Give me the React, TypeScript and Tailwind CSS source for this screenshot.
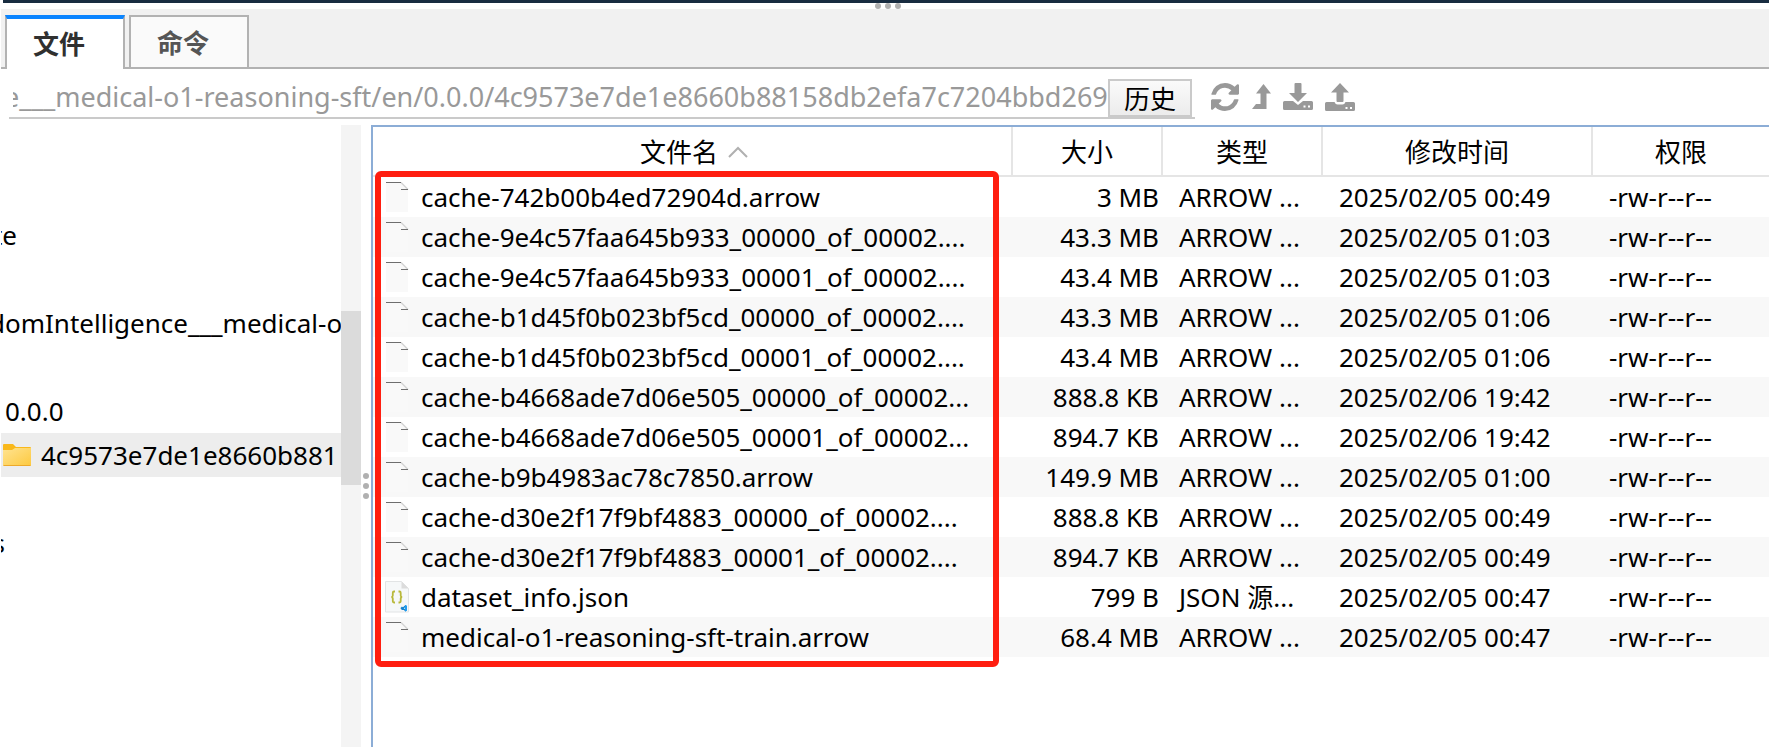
// Path: src/App.tsx
// Description: 远程文件管理面板 - 目录树 + 文件列表

import { useEffect, useRef, useState } from 'react';

type FileItem = {
    name: string;
    size: string;
    type: string;
    time: string;
    mode: string;
};

const MODE = '-rw-r--r--';

const FILES: FileItem[] = [
    { name: 'cache-742b00b4ed72904d.arrow', size: '3 MB', type: 'ARROW ...', time: '2025/02/05 00:49', mode: MODE },
    { name: 'cache-9e4c57faa645b933_00000_of_00002....', size: '43.3 MB', type: 'ARROW ...', time: '2025/02/05 01:03', mode: MODE },
    { name: 'cache-9e4c57faa645b933_00001_of_00002....', size: '43.4 MB', type: 'ARROW ...', time: '2025/02/05 01:03', mode: MODE },
    { name: 'cache-b1d45f0b023bf5cd_00000_of_00002....', size: '43.3 MB', type: 'ARROW ...', time: '2025/02/05 01:06', mode: MODE },
    { name: 'cache-b1d45f0b023bf5cd_00001_of_00002....', size: '43.4 MB', type: 'ARROW ...', time: '2025/02/05 01:06', mode: MODE },
    { name: 'cache-b4668ade7d06e505_00000_of_00002...', size: '888.8 KB', type: 'ARROW ...', time: '2025/02/06 19:42', mode: MODE },
    { name: 'cache-b4668ade7d06e505_00001_of_00002...', size: '894.7 KB', type: 'ARROW ...', time: '2025/02/06 19:42', mode: MODE },
    { name: 'cache-b9b4983ac78c7850.arrow', size: '149.9 MB', type: 'ARROW ...', time: '2025/02/05 01:00', mode: MODE },
    { name: 'cache-d30e2f17f9bf4883_00000_of_00002....', size: '888.8 KB', type: 'ARROW ...', time: '2025/02/05 00:49', mode: MODE },
    { name: 'cache-d30e2f17f9bf4883_00001_of_00002....', size: '894.7 KB', type: 'ARROW ...', time: '2025/02/05 00:49', mode: MODE },
    { name: 'dataset_info.json', size: '799 B', type: 'JSON 源...', time: '2025/02/05 00:47', mode: MODE },
    { name: 'medical-o1-reasoning-sft-train.arrow', size: '68.4 MB', type: 'ARROW ...', time: '2025/02/05 00:47', mode: MODE },
];

function Dots({ vertical = false }: { vertical?: boolean }) {
    return (
        <div className={`flex items-center gap-1 ${vertical ? 'flex-col' : ''}`}>
            <span className="h-1.5 w-1.5 rounded-full bg-[#b0b0b0]" />
            <span className="h-1.5 w-1.5 rounded-full bg-[#b0b0b0]" />
            <span className="h-1.5 w-1.5 rounded-full bg-[#b0b0b0]" />
        </div>
    );
}

function BlankFileIcon() {
    return (
        <svg width="24" height="32" viewBox="0 0 24 32" className="shrink-0">
            <path d="M1 1h15l7 8v22H1z" fill="#f9f9f9" />
            <path d="M16 1.500l7 7" stroke="#d4d4d4" strokeWidth="1.400" fill="none" />
            <path d="M1 1.500h15M16 8.500h7" stroke="#6e6e6e" fill="none" />
        </svg>
    );
}

function JsonFileIcon() {
    return (
        <svg width="24" height="32" viewBox="0 0 24 32" className="shrink-0">
            <path d="M.5.5h16l7 7v23.500H.5z" fill="#f6f8f9" stroke="#e2e4e5" />
            <path d="M16.500 .5v7h7z" fill="#dcdcdc" />
            <path
                d="M10 10.500h-1q-1.200 0-1.200 1.200v2.800q0 1.500-1.500 1.500q1.500 0 1.500 1.500v2.800q0 1.200 1.200 1.200h1M13.500 10.500h1q1.200 0 1.200 1.200v2.800q0 1.500 1.500 1.500q-1.500 0-1.500 1.500v2.800q0 1.200-1.200 1.200h-1"
                fill="none"
                stroke="#b8b83a"
                strokeWidth="1.800"
            />
            <path d="M21 24.500l-4 3.500-1-1M21 30l-4-3.500-1 1" fill="none" stroke="#1583cd" strokeWidth="1.400" />
            <path d="M20 24l2 .8v5l-2 .8z" fill="#1f9cf0" />
        </svg>
    );
}

function FolderIcon() {
    return (
        <svg width="28" height="24" viewBox="0 0 28 24" className="shrink-0">
            <defs>
                <linearGradient id="folder" x1="0" y1="0" x2="1" y2="1">
                    <stop offset="0" stopColor="#ffe391" />
                    <stop offset="1" stopColor="#fdc93f" />
                </linearGradient>
            </defs>
            <path d="M0 2q0-1 1-1h9l3 3h14q1 0 1 1v6H0z" fill="#f9b81b" />
            <path d="M0 7h9l3-2h16v17q0 1-1 1H1q-1 0-1-1z" fill="url(#folder)" />
            <path d="M.5 22.500h27" stroke="#eda92a" />
        </svg>
    );
}

function RefreshIcon() {
    return (
        <svg width="28" height="28" viewBox="0 0 1536 1536" fill="#999">
            <path d="M1511 928q0 5-1 7-64 268-268 434.500T764 1536q-146 0-282.500-55T238 1324l-129 129q-19 19-45 19t-45-19-19-45V960q0-26 19-45t45-19h448q26 0 45 19t19 45-19 45l-137 137q71 66 161 102t187 36q134 0 250-65t186-179q11-17 53-117 8-23 30-23h192q13 0 22.500 9.500t9.500 22.500zm25-800v448q0 26-19 45t-45 19h-448q-26 0-45-19t-19-45 19-45l138-138Q969 256 768 256q-134 0-250 65T332 500q-11 17-53 117-8 23-30 23H50q-13 0-22.500-9.500T18 608v-7q65-268 270-434.500T768 0q146 0 284 55.500T1297 212l130-129q19-19 45-19t45 19 19 45z" />
        </svg>
    );
}

function LevelUpIcon() {
    return (
        <svg width="20" height="28" viewBox="0 0 20 28" fill="#999">
            <path d="M12.500 1L20 10.500h-4.500V26H1l4-5h4.500V10.500H5z" />
        </svg>
    );
}

function DownloadIcon() {
    return (
        <svg width="30" height="28" viewBox="0 0 30 28" fill="#999">
            <path d="M11.500 1q0-1 1-1h5q1 0 1 1v9h5.500L15 19 6 10h5.500z" />
            <path fillRule="evenodd" d="M1.500 18H10l5 4 5-4h8.500q1.500 0 1.500 1.500v6q0 1.500-1.500 1.500h-27Q0 27 0 25.500v-6Q0 18 1.500 18zM20.500 22.500v2h2v-2zM25 22.500v2h2v-2z" />
        </svg>
    );
}

function UploadIcon() {
    return (
        <svg width="30" height="28" viewBox="0 0 30 28" fill="#999">
            <path d="M15 0l9 9.500h-5.500V18q0 1-1 1h-5q-1 0-1-1V9.500H6z" />
            <path fillRule="evenodd" d="M1.500 19H9.500q1 2.500 3 2.500h5q2 0 3-2.500h8q1.500 0 1.500 1.500v6q0 1.500-1.500 1.500h-27Q0 28 0 26.500v-6Q0 19 1.500 19zM20.500 24v2h2v-2zM25 24v2h2v-2z" />
        </svg>
    );
}

export default function App() {
    const [tab, setTab] = useState<'文件' | '命令'>('文件');
    const [path, setPath] = useState('e___medical-o1-reasoning-sft/en/0.0.0/4c9573e7de1e8660b88158db2efa7c7204bbd269');
    const pathRef = useRef<HTMLInputElement>(null);

    // 路径过长时显示末尾
    useEffect(() => {
        if (pathRef.current) pathRef.current.scrollLeft = pathRef.current.scrollWidth;
    }, []);

    return (
        <div className="flex h-screen flex-col overflow-hidden bg-white font-['Noto_Sans','Noto_Sans_CJK_SC',sans-serif] text-[26px] leading-10 text-black">
            {/* 分隔条 */}
            <div className="ml-[3px] h-[3px] shrink-0 bg-[#182c40]" />
            <div className="flex h-1.5 shrink-0 justify-center pl-1.5">
                <Dots />
            </div>

            {/* 标签页 */}
            <div className="ml-px flex shrink-0 items-end gap-1 bg-[#f1f1f1] pl-1 pt-1.5 shadow-[inset_0_-2px_#b2b2b2]">
                {(['文件', '命令'] as const).map(name => (
                    <button
                        key={name}
                        onClick={() => setTab(name)}
                        className={`h-[54px] w-[120px] border-x-2 border-[#b2b2b2] pr-3 text-[26px] font-bold ${tab === name
                            ? 'border-t-4 border-t-[#0a84ff] bg-white text-[#303030]'
                            : 'border-y-2 bg-[#fafafa] pt-0.5 text-[#555]'
                            }`}
                    >
                        {name}
                    </button>
                ))}
            </div>

            {/* 路径与工具栏 */}
            <div className="flex h-14 shrink-0 items-end pb-1.5 pl-[9px]">
                <div className="flex h-10 w-[1186px] items-end border-b-2 border-[#cacaca]">
                    <input
                        ref={pathRef}
                        aria-label="路径"
                        value={path}
                        onChange={(e) => setPath(e.target.value)}
                        className="h-10 min-w-0 flex-1 bg-transparent pl-1 text-[27px] text-[#999] outline-none"
                    />
                    <button className="mr-[3px] h-[38px] w-[84px] shrink-0 border-2 border-[#cacaca] bg-linear-to-b from-[#fafafa] to-[#ececec] leading-9">历史</button>
                </div>
                <div className="flex items-end gap-3 pb-2 pl-4">
                    <button aria-label="刷新"><RefreshIcon /></button>
                    <button aria-label="上级目录"><LevelUpIcon /></button>
                    <button aria-label="下载"><DownloadIcon /></button>
                    <button aria-label="上传"><UploadIcon /></button>
                </div>
            </div>

            <div className="flex min-h-0 flex-1">
                {/* 目录树 */}
                <div className="flex w-[341px] shrink-0 flex-col overflow-hidden whitespace-nowrap pl-px pt-[88px] leading-[44px]">
                    <div className="flex h-11 w-4 justify-end overflow-hidden"><span>te</span></div>
                    <div className="h-11" />
                    <div className="-ml-3 h-11">domIntelligence___medical-o</div>
                    <div className="h-11" />
                    <div className="h-11 pl-1">0.0.0</div>
                    <div className="flex h-11 items-center gap-2.5 bg-[#ededed] pl-0.5">
                        <FolderIcon />
                        <span>4c9573e7de1e8660b881</span>
                    </div>
                    <div className="h-11" />
                    <div className="flex h-11 w-1 justify-end overflow-hidden"><span>s</span></div>
                </div>

                {/* 滚动条 */}
                <div className="w-5 shrink-0 bg-[#f4f4f4] pt-[186px]">
                    <div className="h-[174px] bg-[#dbdbdb]" />
                </div>
                <div className="flex w-2.5 shrink-0 flex-col items-center pt-[348px]">
                    <Dots vertical />
                </div>

                {/* 文件列表 */}
                <div className="relative min-w-0 flex-1 overflow-hidden border-l-2 border-t-2 border-[#8cadd6]">
                    <table className="w-full table-fixed border-separate border-spacing-0 whitespace-nowrap">
                        <colgroup>
                            <col className="w-[640px]" />
                            <col className="w-[150px]" />
                            <col className="w-40" />
                            <col className="w-[270px]" />
                            <col />
                        </colgroup>
                        <thead>
                            <tr className="h-[50px] *:border-b-2 *:border-r-2 *:border-[#e5e5e5] *:p-0 *:pt-0.5 *:font-normal *:last:border-r-0">
                                <th>
                                    <span className="flex items-center justify-center gap-2.5 pl-1">
                                        文件名
                                        <svg width="20" height="12" viewBox="0 0 20 12" fill="none" stroke="#b0b0b0" strokeWidth="2">
                                            <path d="M1 11l9-9 9 9" />
                                        </svg>
                                    </span>
                                </th>
                                <th>大小</th>
                                <th>类型</th>
                                <th>修改时间</th>
                                <th>权限</th>
                            </tr>
                        </thead>
                        <tbody>
                            {FILES.map(file => (
                                <tr key={file.name} className="h-10 even:bg-[#f8f8f8] *:py-0">
                                    <td className="pl-3">
                                        <span className="flex h-10 items-center gap-3">
                                            {file.name.endsWith('.json') ? <JsonFileIcon /> : <BlankFileIcon />}
                                            {file.name}
                                        </span>
                                    </td>
                                    <td className="pr-1 text-right">{file.size}</td>
                                    <td className="pl-4">{file.type}</td>
                                    <td className="pl-4">{file.time}</td>
                                    <td className="pl-4">{file.mode}</td>
                                </tr>
                            ))}
                        </tbody>
                    </table>
                    {/* 红色标注框 */}
                    <div className="pointer-events-none absolute left-0.5 top-11 h-[496px] w-[624px] rounded-md border-6 border-[#ff1e10]" />
                </div>
            </div>
        </div>
    );
}
